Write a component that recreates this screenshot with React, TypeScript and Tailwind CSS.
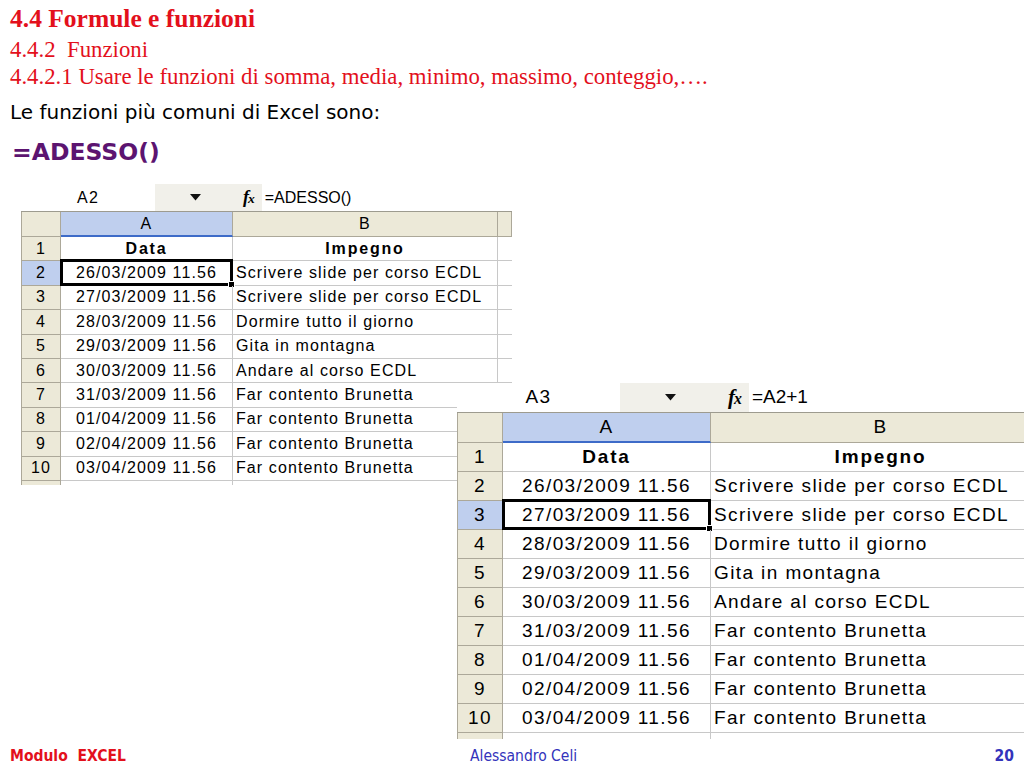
import React from 'react';

const DATES = [
  '26/03/2009 11.56',
  '27/03/2009 11.56',
  '28/03/2009 11.56',
  '29/03/2009 11.56',
  '30/03/2009 11.56',
  '31/03/2009 11.56',
  '01/04/2009 11.56',
  '02/04/2009 11.56',
  '03/04/2009 11.56',
];

const TASKS = [
  'Scrivere slide per corso ECDL',
  'Scrivere slide per corso ECDL',
  'Dormire tutto il giorno',
  'Gita in montagna',
  'Andare al corso ECDL',
  'Far contento Brunetta',
  'Far contento Brunetta',
  'Far contento Brunetta',
  'Far contento Brunetta',
];

type Sizes = {
  wrap: string;
  text: string;
  bar: string;
  nameBox: string;
  arrowBox: string;
  fx: string;
  head: string;
  row: string;
  rowHead: string;
  colA: string;
  colB: string;
  tail: string;
};

const SMALL: Sizes = {
  wrap: 'ml-[21px] mt-[12px] w-[491px]',
  text: 'text-[16px] tracking-[1.1px]',
  bar: 'h-[28px]',
  nameBox: 'w-[134px]',
  arrowBox: 'w-[80px]',
  fx: 'text-[18px]',
  head: 'h-[25px]',
  row: 'h-[24.4px]',
  rowHead: 'w-[39px]',
  colA: 'w-[172px]',
  colB: 'w-[265px]',
  tail: 'h-[4px]',
};

const BIG: Sizes = {
  wrap: 'absolute left-[457px] top-[383px] w-[620px] bg-white',
  text: 'text-[19px] tracking-[1.4px]',
  bar: 'h-[30px]',
  nameBox: 'w-[163px]',
  arrowBox: 'w-[100px]',
  fx: 'text-[21px]',
  head: 'h-[30px]',
  row: 'h-[29px]',
  rowHead: 'w-[45px]',
  colA: 'w-[208px]',
  colB: 'w-[340px]',
  tail: 'h-[6px]',
};

function Fx({ cls }: { cls: string }) {
  return (
    <span className={`${cls} font-bold italic tracking-[-1px]`} style={{ fontFamily: '"Liberation Serif", serif' }}>
      f<span className="text-[0.75em]">x</span>
    </span>
  );
}

function Sheet({ s, name, formula, active }: { s: Sizes; name: string; formula: string; active: number }) {
  const hdr = 'bg-[#ece9d8] border-r border-b border-[#aca899] flex items-center justify-center text-[#000]';
  const sel = 'bg-[#bfcfee] border-r border-b border-[#aca899] flex items-center justify-center';
  return (
    <div className={`${s.wrap} ${s.text} text-black`} style={{ fontFamily: '"Liberation Sans", Arial, sans-serif' }}>
      {/* name box + formula bar */}
      <div className={`${s.bar} flex bg-[#f1f0ea] border-b border-[#9d9b8f]`}>
        <div className={`${s.nameBox} bg-white flex items-center justify-center`}>{name}</div>
        <div className={`${s.arrowBox} flex items-center justify-center`}>
          <svg width="11" height="7" viewBox="0 0 11 7">
            <path d="M0 0 H11 L5.5 6.5 Z" fill="#111" />
          </svg>
        </div>
        <div className="flex items-center px-2">
          <Fx cls={s.fx} />
        </div>
        <div className="flex-1 bg-white flex items-center pl-[3px] tracking-normal">{formula}</div>
      </div>
      {/* column headers */}
      <div className={`${s.head} flex border-l border-[#aca899]`}>
        <div className={`${s.rowHead} ${hdr}`} />
        <div className={`${s.colA} bg-[#bfcfee] border-r border-[#aca899] border-b-2 border-b-[#3d6bc8] flex items-center justify-center`}>A</div>
        <div className={`${s.colB} ${hdr}`}>B</div>
        <div className={`flex-1 ${hdr}`} />
      </div>
      {/* data rows */}
      <div className={`${s.row} flex border-l border-[#aca899]`}>
        <div className={`${s.rowHead} ${hdr}`}>1</div>
        <div className={`${s.colA} border-r border-b border-[#c8c8c8] flex items-center justify-center font-bold tracking-[1.8px]`}>Data</div>
        <div className={`${s.colB} border-r border-b border-[#c8c8c8] flex items-center justify-center font-bold tracking-[1.8px]`}>Impegno</div>
        <div className="flex-1 border-b border-[#c8c8c8]" />
      </div>
      {DATES.map((d, i) => {
        const n = i + 2;
        const isActive = n === active;
        return (
          <div key={n} className={`${s.row} flex border-l border-[#aca899]`}>
            <div className={`${s.rowHead} ${isActive ? sel : hdr}`}>{n}</div>
            <div className={`${s.colA} relative border-r border-b border-[#c8c8c8] flex items-center justify-center`}>
              {d}
              {isActive && (
                <span className="absolute -left-px -top-[2px] -right-px -bottom-px border-[3px] border-black">
                  <span className="absolute -right-[5px] -bottom-[5px] w-[7px] h-[7px] bg-black border border-white" />
                </span>
              )}
            </div>
            <div className={`${s.colB} border-r border-b border-[#c8c8c8] flex items-center pl-[3px] whitespace-nowrap overflow-hidden`}>{TASKS[i]}</div>
            <div className="flex-1 border-b border-[#c8c8c8]" />
          </div>
        );
      })}
      <div className={`${s.tail} flex border-l border-[#aca899]`}>
        <div className={`${s.rowHead} bg-[#ece9d8] border-r border-[#aca899]`} />
        <div className={`${s.colA} border-r border-[#c8c8c8]`} />
        <div className={`${s.colB} border-r border-[#c8c8c8]`} />
      </div>
    </div>
  );
}

export default function App() {
  return (
    <div className="relative w-[1024px] h-[768px] overflow-hidden bg-white">
      <div className="pl-[10px]" style={{ fontFamily: '"Liberation Serif", "Times New Roman", serif' }}>
        <h1 className="text-[25.5px] leading-[38px] font-bold text-[#e3101c]">4.4 Formule e funzioni</h1>
        <p className="text-[22.8px] leading-[24px] text-[#e3101c] whitespace-pre">4.4.2  Funzioni</p>
        <p className="text-[22.8px] leading-[30px] text-[#e3101c]">4.4.2.1 Usare le funzioni di somma, media, minimo, massimo, conteggio,….</p>
      </div>
      <div className="pl-[10px]" style={{ fontFamily: '"DejaVu Sans", Verdana, sans-serif' }}>
        <p className="text-[20px] leading-[40px] text-black">Le funzioni più comuni di Excel sono:</p>
        <p className="text-[23.5px] leading-[40px] font-bold text-[#5c1470] pl-[2px]">=ADESSO()</p>
      </div>

      <Sheet s={SMALL} name="A2" formula="=ADESSO()" active={2} />
      <Sheet s={BIG} name="A3" formula="=A2+1" active={3} />

      <div
        className="absolute left-0 right-0 bottom-0 h-[22px] flex items-center px-[10px] text-[15.5px]"
        style={{ fontFamily: '"DejaVu Sans Condensed", "DejaVu Sans", Verdana, sans-serif' }}
      >
        <span className="font-bold text-[#e3101c] whitespace-pre w-[460px]">Modulo  EXCEL</span>
        <span className="text-[#3333bb]">Alessandro Celi</span>
        <span className="ml-auto font-bold text-[#3333bb] text-[15.5px]">20</span>
      </div>
    </div>
  );
}
